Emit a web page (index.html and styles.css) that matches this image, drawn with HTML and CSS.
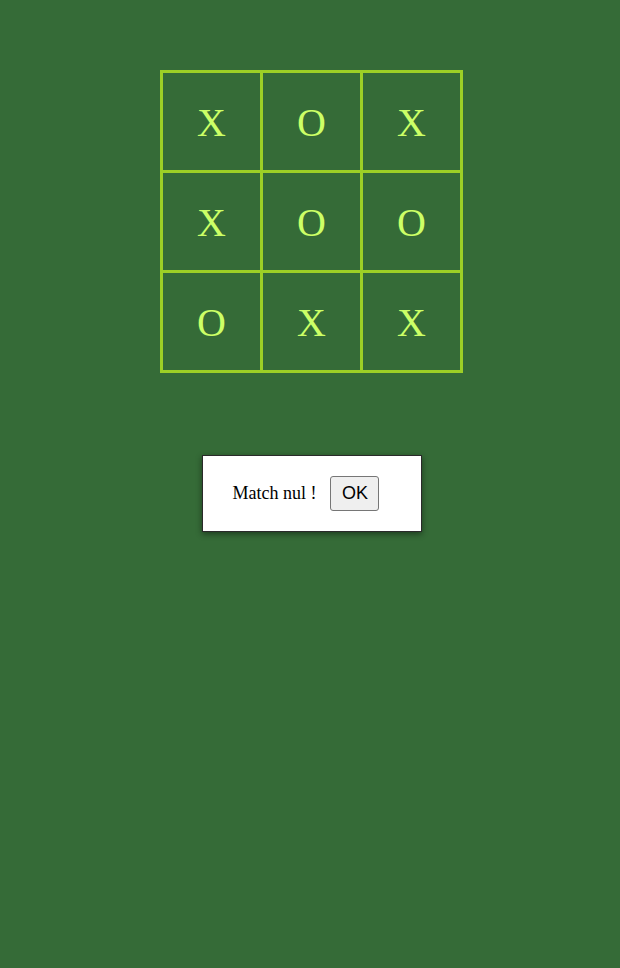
FILE: index.html
```html
<!DOCTYPE html>
<html lang="fr">
<head>
<meta charset="utf-8">
<title>Morpion</title>
<link rel="stylesheet" href="styles.css">
</head>
<body>
<main class="page">
  <div class="board">
    <div class="cell">X</div>
    <div class="cell">O</div>
    <div class="cell">X</div>
    <div class="cell">X</div>
    <div class="cell">O</div>
    <div class="cell">O</div>
    <div class="cell">O</div>
    <div class="cell">X</div>
    <div class="cell">X</div>
  </div>
  <div class="dialog">
    <span class="message">Match nul !</span>
    <button class="ok" type="button">OK</button>
  </div>
</main>
</body>
</html>
```
FILE: styles.css
```css
html, body {
  margin: 0;
  padding: 0;
  height: 100%;
}
body {
  background: #356b37;
  font-family: "Liberation Serif", "Times New Roman", serif;
}
.page {
  display: flex;
  flex-direction: column;
  align-items: center;
  padding-top: 70px;
  padding-left: 3px;
}
.board {
  display: grid;
  grid-template-columns: repeat(3, 97px);
  grid-template-rows: repeat(3, 97px);
  gap: 3px;
  padding: 3px;
  background: #9dcf26;
}
.cell {
  background: #356b37;
  color: #ccff66;
  font-size: 40px;
  display: flex;
  align-items: center;
  justify-content: center;
  padding-top: 1px;
}
.dialog {
  margin-top: 82px;
  box-sizing: border-box;
  width: 220px;
  height: 77px;
  background: #fff;
  border: 1px solid #2a2a2a;
  box-shadow: 0 2px 6px rgba(0,0,0,0.45);
  display: flex;
  align-items: center;
  padding-left: 30px;
  gap: 14px;
}
.message {
  font-size: 18px;
  color: #000;
}
.ok {
  font-family: "Liberation Sans", Arial, sans-serif;
  font-size: 18px;
  height: 35px;
  width: 49px;
  padding: 0;
  background: #efefef;
  border: 1px solid #767676;
  border-radius: 3px;
  color: #000;
}
```
